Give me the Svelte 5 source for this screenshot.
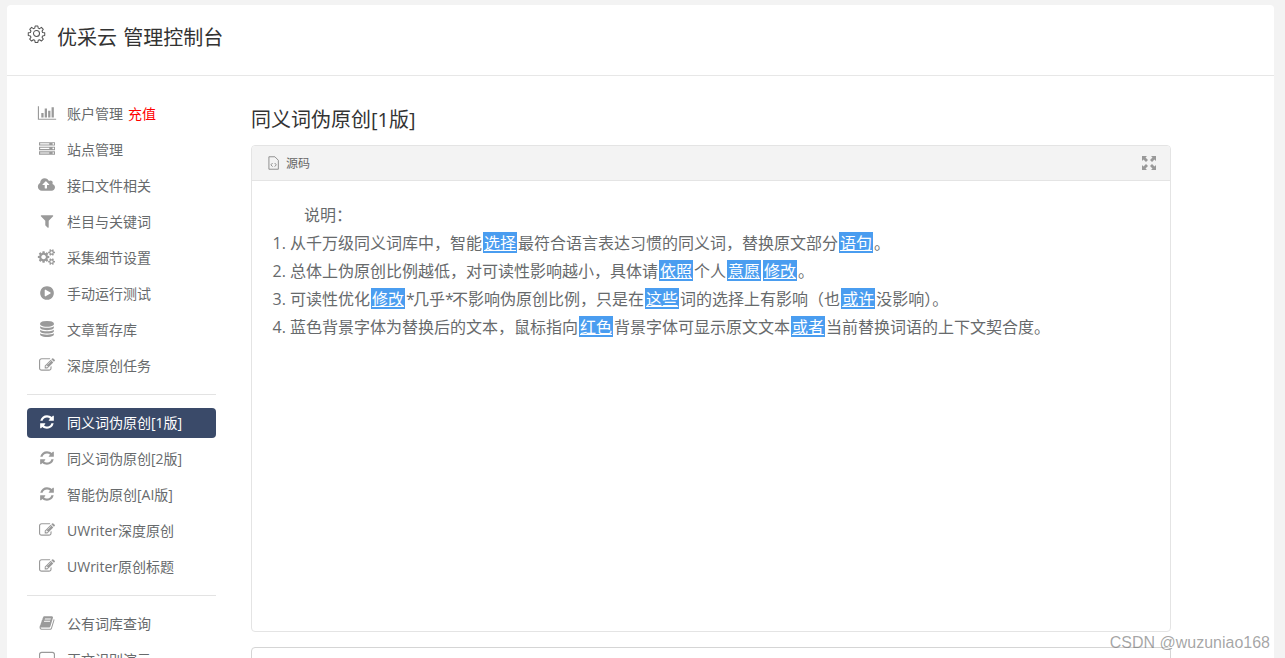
<script>
  // font-awesome 4 style glyphs, x is the horizontal offset into a 2016 wide box
  const glyphs = {
    chart: { x: 16, d: 'M640 896v512h-256v-512h256zm384-512v1024h-256v-1024h256zm1024 1152v128h-2048v-1536h128v1408h1920zm-640-896v768h-256v-768h256zm384-384v1152h-256v-1152h256z' },
    server: { x: -112, d: 'M128 1408h1024v-128h-1024v128zm0-512h1024v-128h-1024v128zm1568 448q0-40-28-68t-68-28-68 28-28 68 28 68 68 28 68-28 28-68zm-1568-960h1024v-128h-1024v128zm1568 448q0-40-28-68t-68-28-68 28-28 68 28 68 68 28 68-28 28-68zm0-512q0-40-28-68t-68-28-68 28-28 68 28 68 68 28 68-28 28-68zm96 832v384h-1792v-384h1792zm0-512v384h-1792v-384h1792zm0-512v384h-1792v-384h1792z' },
    cloud: { x: -112, d: 'M1152 864q0-14-9-23l-352-352q-9-9-23-9t-23 9l-351 351q-10 12-10 24 0 14 9 23t23 9h224v352q0 13 9.500 22.500t22.500 9.500h192q13 0 22.500-9.500t9.500-22.500v-352h224q13 0 22.500-9.500t9.500-22.500zm640 288q0 159-112.500 271.500t-271.500 112.500h-1088q-185 0-316.500-131.500t-131.500-316.500q0-130 70-240t188-165q-2-30-2-43 0-212 150-362t362-150q156 0 285.500 87t188.500 231q71-62 166-62 106 0 181 75t75 181q0 76-41 138 130 31 213.500 135.500t83.500 238.500z' },
    filter: { x: -112, d: 'M1595 295q17 41-14 70l-493 493v742q0 42-39 59-13 5-25 5-27 0-45-19l-256-256q-19-19-19-45v-486l-493-493q-31-29-14-70 17-39 59-39h1280q42 0 59 39z' },
    cogs: { x: 16, d: 'M896 896q0-106-75-181t-181-75-181 75-75 181 75 181 181 75 181-75 75-181zm768 512q0-52-38-90t-90-38-90 38-38 90q0 53 37.500 90.500t90.500 37.500 90.500-37.500 37.500-90.500zm0-1024q0-52-38-90t-90-38-90 38-38 90q0 53 37.500 90.500t90.500 37.500 90.500-37.500 37.500-90.500zm-384 421v185q0 10-7 19.500t-16 10.500l-155 24q-11 35-32 76 34 48 90 115 7 11 7 20 0 12-7 19-23 30-82.500 89.500t-78.500 59.500q-11 0-21-7l-115-90q-37 19-77 31-11 108-23 155-7 24-30 24h-186q-11 0-20-7.500t-10-17.500l-23-153q-34-10-75-31l-118 89q-7 7-20 7-11 0-21-8-144-133-144-160 0-9 7-19 10-14 41-53t47-61q-23-44-35-82l-152-24q-10-1-17-9.500t-7-19.500v-185q0-10 7-19.500t16-10.500l155-24q11-35 32-76-34-48-90-115-7-11-7-20 0-12 7-20 22-30 82-89t79-59q11 0 21 7l115 90q34-18 77-32 11-108 23-154 7-24 30-24h186q11 0 20 7.500t10 17.500l23 153q34 10 75 31l118-89q8-7 20-7 11 0 21 8 144 133 144 160 0 8-7 19-12 16-42 54t-45 60q23 48 34 82l152 23q10 2 17 10.500t7 19.500zm640 533v140q0 16-149 31-12 27-30 52 51 113 51 138 0 4-4 7-122 71-124 71-8 0-46-47t-52-68q-20 2-30 2t-30-2q-14 21-52 68t-46 47q-2 0-124-71-4-3-4-7 0-25 51-138-18-25-30-52-149-15-149-31v-140q0-16 149-31 13-29 30-52-51-113-51-138 0-4 4-7 4-2 35-20t59-34 30-16q8 0 46 46.500t52 67.500q20-2 30-2t30 2q51-71 92-112l6-2q4 0 124 70 4 3 4 7 0 25-51 138 17 23 30 52 149 15 149 31zm0-1024v140q0 16-149 31-12 27-30 52 51 113 51 138 0 4-4 7-122 71-124 71-8 0-46-47t-52-68q-20 2-30 2t-30-2q-14 21-52 68t-46 47q-2 0-124-71-4-3-4-7 0-25 51-138-18-25-30-52-149-15-149-31v-140q0-16 149-31 13-29 30-52-51-113-51-138 0-4 4-7 4-2 35-20t59-34 30-16q8 0 46 46.500t52 67.500q20-2 30-2t30 2q51-71 92-112l6-2q4 0 124 70 4 3 4 7 0 25-51 138 17 23 30 52 149 15 149 31z' },
    play: { x: -112, d: 'M896 128q209 0 385.500 103t279.500 279.500 103 385.500-103 385.500-279.500 279.500-385.500 103-385.500-103-279.500-279.500-103-385.500 103-385.500 279.500-279.500 385.500-103zm384 823q32-18 32-55t-32-55l-544-320q-31-19-64-1-32 19-32 56v640q0 37 32 56 16 8 32 8 17 0 32-9z' },
    db: { x: -112, d: 'M896 768q237 0 443-43t325-127v170q0 69-103 128t-280 93.500-385 34.500-385-34.500-280-93.500-103-128v-170q119 84 325 127t443 43zm0 768q237 0 443-43t325-127v170q0 69-103 128t-280 93.500-385 34.500-385-34.500-280-93.500-103-128v-170q119 84 325 127t443 43zm0-384q237 0 443-43t325-127v170q0 69-103 128t-280 93.500-385 34.500-385-34.500-280-93.500-103-128v-170q119 84 325 127t443 43zm0-1152q208 0 385 34.500t280 93.500 103 128v128q0 69-103 128t-280 93.500-385 34.500-385-34.500-280-93.500-103-128v-128q0-69 103-128t280-93.500 385-34.500z' },
    edit: { x: -112, d: 'M888 1184l116-116-152-152-116 116v56h96v96h56zm440-720q-16-16-33 1l-350 350q-17 17-1 33t33-1l350-350q17-17 1-33zm80 594v190q0 119-84.500 203.500t-203.500 84.500h-832q-119 0-203.500-84.500t-84.500-203.500v-832q0-119 84.500-203.500t203.500-84.500h832q63 0 117 25 15 7 18 23 3 17-9 29l-49 49q-14 14-32 8-23-6-45-6h-832q-66 0-113 47t-47 113v832q0 66 47 113t113 47h832q66 0 113-47t47-113v-126q0-13 9-22l64-64q15-15 35-7t20 29zm-96-738l288 288-672 672h-288v-288zm444 132l-92 92-288-288 92-92q28-28 68-28t68 28l152 152q28 28 28 68t-28 68z' },
    refresh: { x: -112, d: 'M1639 1056q0 5-1 7-64 268-268 434.500t-478 166.500q-146 0-282.500-55t-243.500-155l-129 129q-19 19-45 19t-45-19-19-45v-448q0-26 19-45t45-19h448q26 0 45 19t19 45-19 45l-137 137q71 66 161 102t187 36q134 0 250-65t186-179q11-17 53-117 8-23 30-23h192q13 0 22.500 9.500t9.500 22.500zm25-800v448q0 26-19 45t-45 19h-448q-26 0-45-19t-19-45 19-45l138-138q-148-137-349-137-134 0-250 65t-186 179q-11 17-53 117-8 23-30 23h-199q-13 0-22.500-9.500t-9.500-22.500v-7q65-268 270-434.500t480-166.500q146 0 284 55.500t245 154.500l130-129q19-19 45-19t45 19 19 45z' },
    book: { x: -112, d: 'M1703 478q40 57 18 129l-275 906q-19 64-76.500 107.500t-122.500 43.500h-923q-77 0-148.500-53.500t-99.500-131.500q-24-67-2-127 0-4 3-27t4-37q1-8-3-21.500t-3-19.500q2-11 8-21t16.500-23.500 16.500-23.500q23-38 45-91.500t30-91.500q3-10 .5-30t-.5-28q3-11 17-28t17-23q21-36 42-92t25-90q1-9-2.500-32t.5-28q4-13 22-30.500t22-22.500q19-26 42.500-84.500t27.500-96.500q1-8-3-25.500t-2-26.500q2-8 9-18t18-23 17-21q8-12 16.500-30.500t15-35 16-36 19.500-32 26.500-23.500 36-11.500 47.500 5.500l-1 3q38-9 51-9h761q74 0 114 56t18 130l-274 906q-36 119-71.500 153.500t-128.500 34.500h-869q-27 0-38 15-11 16-1 43 24 70 144 70h923q29 0 56-15.500t35-41.500l300-987q7-22 5-57 38 15 59 43zm-1064 2q-4 13 2 22.500t20 9.500h608q13 0 25.500-9.500t16.500-22.500l21-64q4-13-2-22.500t-20-9.500h-608q-13 0-25.500 9.500t-16.500 22.500zm-83 256q-4 13 2 22.500t20 9.500h608q13 0 25.500-9.500t16.500-22.500l21-64q4-13-2-22.500t-20-9.500h-608q-13 0-25.500 9.500t-16.500 22.500z' },
    square: { x: -112, d: 'M1664 1408V384q0-66-47-113t-113-47H288q-66 0-113 47t-47 113v1024zM288 96h1216q119 0 203.500 84.500T1792 384v1024q0 119-84.500 203.500T1504 1696H288q-119 0-203.500-84.500T0 1408V384q0-119 84.500-203.500T288 96z' },
  }

  const groups = [
    [
      { icon: 'chart', label: '账户管理', badge: '充值' },
      { icon: 'server', label: '站点管理' },
      { icon: 'cloud', label: '接口文件相关' },
      { icon: 'filter', label: '栏目与关键词' },
      { icon: 'cogs', label: '采集细节设置' },
      { icon: 'play', label: '手动运行测试' },
      { icon: 'db', label: '文章暂存库' },
      { icon: 'edit', label: '深度原创任务' },
    ],
    [
      { icon: 'refresh', label: '同义词伪原创[1版]', active: true },
      { icon: 'refresh', label: '同义词伪原创[2版]' },
      { icon: 'refresh', label: '智能伪原创[AI版]' },
      { icon: 'edit', label: 'UWriter深度原创' },
      { icon: 'edit', label: 'UWriter原创标题' },
    ],
    [
      { icon: 'book', label: '公有词库查询' },
      { icon: 'square', label: '正文识别演示' },
    ],
  ]

  // second value: 1 = highlighted word, 2 = narrow asterisk
  const notes = [
    [['从千万级同义词库中，智能'], ['选择', 1], ['最符合语言表达习惯的同义词，替换原文部分'], ['语句', 1], ['。']],
    [['总体上伪原创比例越低，对可读性影响越小，具体请'], ['依照', 1], ['个人'], ['意愿', 1], ['修改', 1], ['。']],
    [['可读性优化'], ['修改', 1], ['*', 2], ['几乎'], ['*', 2], ['不影响伪原创比例，只是在'], ['这些', 1], ['词的选择上有影响（也'], ['或许', 1], ['没影响）。']],
    [['蓝色背景字体为替换后的文本，鼠标指向'], ['红色', 1], ['背景字体可显示原文文本'], ['或者', 1], ['当前替换词语的上下文契合度。']],
  ]
</script>

<div class="page">
  <div class="shell">
    <header class="top">
      <svg class="gear" viewBox="0 0 24 24" aria-hidden="true">
        <path d="M10.300 2.500h3.400l.5 2.700 1.700.7 2.300-1.600 2.400 2.400-1.600 2.300.7 1.700 2.700.5v3.400l-2.700.5-.7 1.700 1.600 2.300-2.400 2.400-2.300-1.600-1.700.7-.5 2.700h-3.400l-.5-2.700-1.700-.7-2.300 1.600-2.400-2.400 1.600-2.300-.7-1.700-2.700-.5v-3.400l2.700-.5.700-1.700-1.600-2.300 2.400-2.400 2.300 1.600 1.700-.7z" />
        <circle cx="12" cy="12" r="3.800" />
      </svg>
      <h1>优采云 管理控制台</h1>
    </header>

    <div class="body">
      <nav class="side">
        {#each groups as group, g}
          {#if g > 0}<hr />{/if}
          <ul>
            {#each group as item}
              <li class:active={item.active}>
                <svg class="ico" viewBox="{glyphs[item.icon].x} 0 2016 1792" aria-hidden="true">
                  <path d={glyphs[item.icon].d} />
                </svg>
                <span>{item.label}</span>
                {#if item.badge}<em>{item.badge}</em>{/if}
              </li>
            {/each}
          </ul>
        {/each}
      </nav>

      <main class="content">
        <h2>同义词伪原创[1版]</h2>
        <section class="editor">
          <div class="toolbar">
            <span class="source">
              <svg class="file" viewBox="0 0 12 15" aria-hidden="true">
                <path d="M1 .7h6.500L11.300 4.500v9.800H1z" fill="none" stroke="currentColor" />
                <path d="M5 7.500L3.200 9.500 5 11.500M7.300 7.500L9 9.500l-1.700 2" fill="none" stroke="currentColor" />
              </svg>
              源码
            </span>
            <svg class="expand" viewBox="0 0 14 14" aria-hidden="true">
              <path d="M0 0h5L3.500 1.500 6 4 4 6 1.500 3.500 0 5zM14 0v5l-1.500-1.500L10 6 8 4l2.500-2.500L9 0zM0 14V9l1.500 1.500L4 8l2 2-2.500 2.500L5 14zM14 14H9l1.500-1.500L8 10l2-2 2.500 2.500L14 9z" />
            </svg>
          </div>
          <div class="text">
            <p class="intro">说明：</p>
            <ol>
              {#each notes as line}
                <li>{#each line as [t, kind]}{#if kind === 1}<mark>{t}</mark>{:else if kind === 2}<span class="star">{t}</span>{:else}{t}{/if}{/each}</li>
              {/each}
            </ol>
          </div>
        </section>
        <div class="next"></div>
      </main>
    </div>
  </div>
  <div class="mark">CSDN @wuzuniao168</div>
</div>

<style>
  :global(body) {
    margin: 0;
    background: #f3f3f3;
    font-family: "Open Sans", "Liberation Sans", "Noto Sans CJK SC", sans-serif;
    overflow: hidden;
  }
  .page {
    height: 658px;
    overflow: hidden;
    position: relative;
    padding: 5px 11px 0 7px;
    box-sizing: border-box;
  }
  .shell {
    background: #fff;
    border-radius: 4px 4px 0 0;
    height: 653px;
    overflow: hidden;
  }
  .top {
    height: 71px;
    border-bottom: 1px solid #e7e7e7;
    display: flex;
    align-items: center;
    padding: 0 0 8px 20px;
    box-sizing: border-box;
    gap: 11px;
  }
  .gear {
    width: 19px;
    height: 19px;
    margin-top: -5px;
    fill: none;
    stroke: #555;
    stroke-width: 1.300;
    stroke-linejoin: round;
  }
  h1 {
    margin: 0;
    font-size: 20px;
    font-weight: 400;
    color: #333;
    word-spacing: 1px;
  }
  .body {
    display: flex;
  }
  .side {
    width: 189px;
    margin-left: 20px;
    padding-top: 23px;
    flex: none;
  }
  ul {
    list-style: none;
    margin: 0;
    padding: 0;
    display: flex;
    flex-direction: column;
    gap: 6px;
  }
  ul li {
    height: 30px;
    box-sizing: border-box;
    display: flex;
    align-items: center;
    padding: 0 0 2px 11px;
    border-radius: 4px;
    font-size: 14px;
    color: #676a6c;
  }
  ul li .ico {
    width: 18px;
    height: 16px;
    margin-right: 11px;
    fill: currentColor;
    color: #9a9a9a;
    flex: none;
    overflow: visible;
  }
  ul li.active {
    background: #3a4a69;
    color: #fff;
  }
  ul li.active .ico {
    color: #fff;
  }
  ul li em {
    font-style: normal;
    color: #f00;
    margin-left: 5px;
  }
  hr {
    border: 0;
    border-top: 1px solid #e3e3e3;
    margin: 13px 0;
  }
  .content {
    margin-left: 35px;
    width: 920px;
    flex: none;
  }
  h2 {
    margin: 30px 0 11px;
    font-size: 20px;
    line-height: 28px;
    font-weight: 400;
    color: #333;
  }
  .editor {
    height: 487px;
    border: 1px solid #e4e4e4;
    border-radius: 4px;
    box-sizing: border-box;
  }
  .toolbar {
    height: 34px;
    background: #f3f3f3;
    border-bottom: 1px solid #e4e4e4;
    display: flex;
    align-items: center;
    justify-content: space-between;
    padding: 0 14px 0 16px;
    border-radius: 4px 4px 0 0;
  }
  .source {
    display: flex;
    align-items: center;
    gap: 7px;
    font-size: 12px;
    color: #666;
  }
  .file {
    width: 11px;
    height: 14px;
    color: #888;
  }
  .expand {
    width: 14px;
    height: 14px;
    fill: #999;
  }
  .text {
    padding: 20px 20px 0;
    font-size: 16px;
    line-height: 28px;
    color: #676a6c;
  }
  .intro {
    margin: 0 0 0 32px;
  }
  ol {
    margin: 0;
    padding: 0 0 0 18px;
  }
  mark {
    display: inline-block;
    background: #4a9df0;
    color: #fff;
    line-height: 19px;
    margin: 0 1px;
    padding: 2px 1px 0;
    text-decoration: underline;
    text-decoration-thickness: 1px;
    text-underline-offset: 1px;
  }
  .star {
    letter-spacing: -1.800px;
  }
  .next {
    height: 40px;
    margin-top: 15px;
    border: 1px solid #d5d5d5;
    border-radius: 4px 4px 0 0;
  }
  .mark {
    position: absolute;
    right: 15px;
    bottom: 6px;
    font-size: 16px;
    color: rgba(90, 90, 90, 0.55);
    font-family: "Liberation Sans", sans-serif;
  }
</style>
